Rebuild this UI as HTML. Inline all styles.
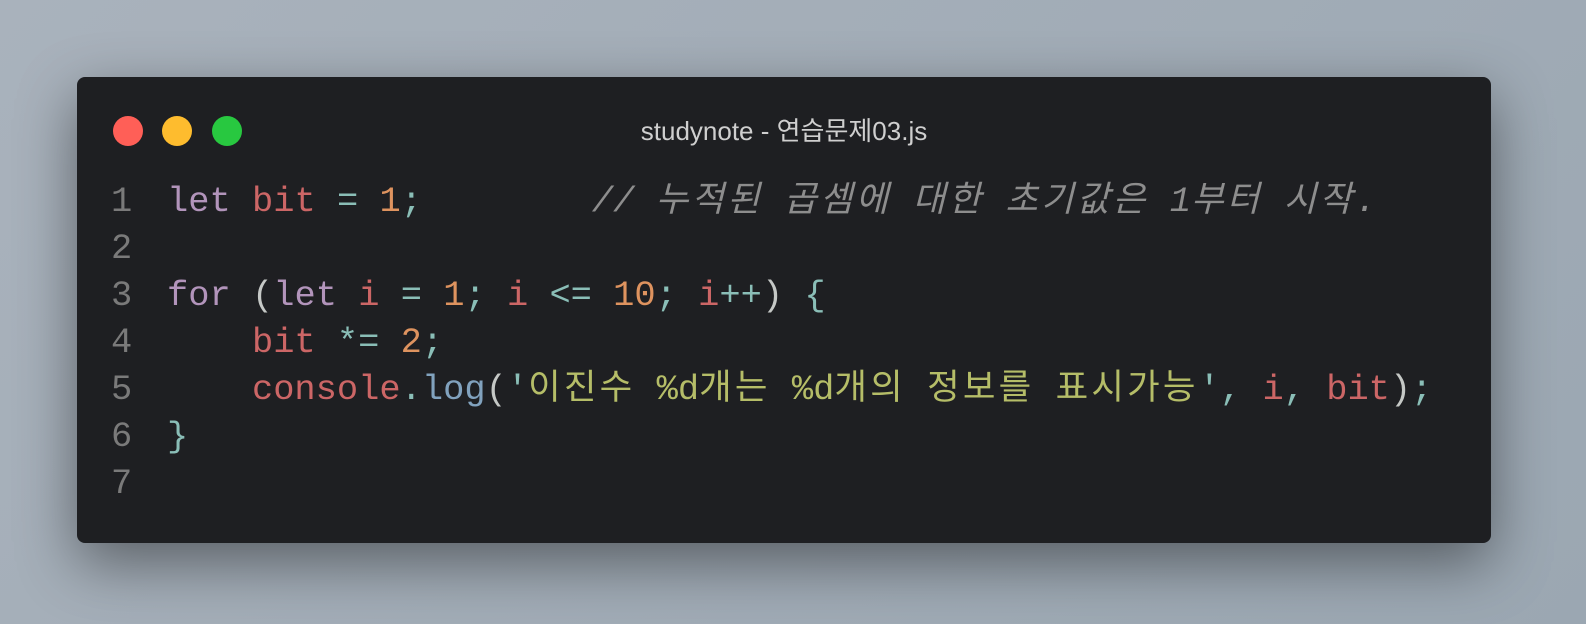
<!DOCTYPE html>
<html><head><meta charset="utf-8"><style>
html,body{margin:0;padding:0}
body{width:1586px;height:624px;background:linear-gradient(135deg,#a9b2bc,#9ba7b2);position:relative;overflow:hidden}
.win{position:absolute;left:77px;top:77px;width:1414px;height:466px;background:#1e1f22;border-radius:8px;box-shadow:0 20px 60px rgba(0,0,0,.45)}
.dot{position:absolute;top:39px;width:30px;height:30px;border-radius:50%}
.title{position:absolute;left:0;right:0;top:39px;text-align:center;color:#cfcfcf;font:26px "Liberation Sans","Noto Sans CJK KR",sans-serif;line-height:30px}
pre{position:absolute;top:102px;margin:0;font-family:"Liberation Mono","Noto Sans CJK KR",monospace;font-size:35.4px;line-height:47px;color:#c5c8c6}
.nums{left:34px}
.code{left:90px}
.h{letter-spacing:3.2px}
.n{color:#7a7a7a}.k{color:#b294bb}.v{color:#cc6666}.o{color:#8abeb7}.d{color:#de935f}.s{color:#b5bd68}.f{color:#81a2be}.c{color:#8d8d8d;font-style:italic}.p{color:#c5c8c6}
</style></head><body>
<div class="win">
<div class="dot" style="left:36px;background:#ff5f57"></div>
<div class="dot" style="left:85px;background:#febc2e"></div>
<div class="dot" style="left:135px;background:#28c840"></div>
<div class="title">studynote - 연습문제03.js</div>
<pre class="nums n">1
2
3
4
5
6
7</pre>
<pre class="code"><span class="k">let</span> <span class="v">bit</span> <span class="o">=</span> <span class="d">1</span><span class="o">;</span>        <span class="c">// <span class="h">누적된</span> <span class="h">곱셈에</span> <span class="h">대한</span> <span class="h">초기값은</span> 1<span class="h">부터</span> <span class="h">시작</span>.</span>

<span class="k">for</span> <span class="p">(</span><span class="k">let</span> <span class="v">i</span> <span class="o">=</span> <span class="d">1</span><span class="o">;</span> <span class="v">i</span> <span class="o">&lt;=</span> <span class="d">10</span><span class="o">;</span> <span class="v">i</span><span class="o">++</span><span class="p">)</span> <span class="o">{</span>
    <span class="v">bit</span> <span class="o">*=</span> <span class="d">2</span><span class="o">;</span>
    <span class="v">console</span><span class="o">.</span><span class="f">log</span><span class="p">(</span><span class="o">'</span><span class="s"><span class="h">이진수</span> %d<span class="h">개는</span> %d<span class="h">개의</span> <span class="h">정보를</span> <span class="h">표시가능</span></span><span class="o">'</span><span class="o">,</span> <span class="v">i</span><span class="o">,</span> <span class="v">bit</span><span class="p">)</span><span class="o">;</span>
<span class="o">}</span>
</pre>
</div>
</body></html>
